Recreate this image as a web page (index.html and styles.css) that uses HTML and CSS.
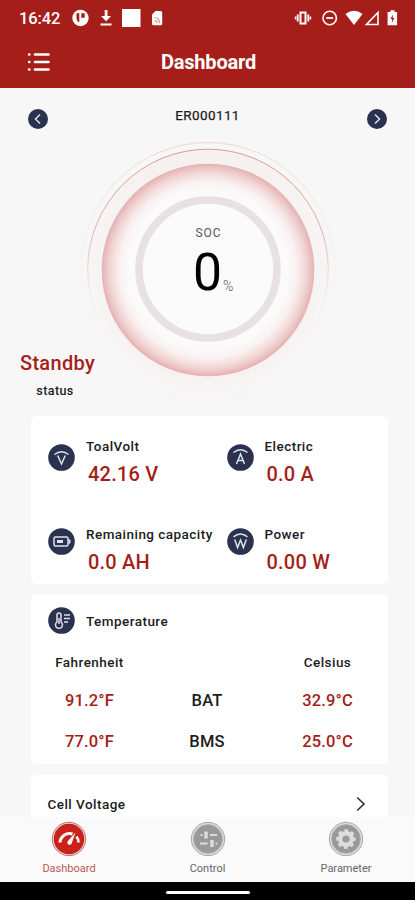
FILE: index.html
```html
<!DOCTYPE html>
<html lang="en">
<head>
<meta charset="utf-8">
<meta name="viewport" content="width=device-width, initial-scale=1">
<title>Dashboard</title>
<link rel="stylesheet" href="styles.css">
</head>
<body>
<div class="app">
  <header class="top">
    <div class="status-bar">
      <span class="clock">16:42</span>
      <svg class="status-left" width="92" height="18" viewBox="0 0 92 18" fill="#fff">
        <circle cx="8.500" cy="9" r="8.200"/>
        <path d="M4.500 4.200h2.800v9.300Q4.800 12.500 4.500 9.500zM9.300 4.200h3.400v4.600H9.300z" fill="#a61e19"/>
        <path d="M32.700 1h2.800v6h3.600l-5 5.200L29 7h3.700zM28.500 14.500h11v1.900h-11z"/>
        <path d="M50 0h18.500v18H50z"/>
        <path d="M83.500 2h5.200q1.500 0 1.500 1.500v11.300q0 1.500-1.500 1.500h-7.200q-1.500 0-1.500-1.500V5.500z"/>
        <path d="M82.500 8.500q5 0 5 5.500M82.500 11.500q2.500 0 2.500 2.500" fill="none" stroke="#d58f8c" stroke-width="1.200"/>
      </svg>
      <svg class="status-right" width="104" height="18" viewBox="0 0 104 18" fill="none" stroke="#fff">
        <path d="M6.500 3.500h5v11h-5z" stroke-width="2"/>
        <path d="M3.700 5.500v7M14.300 5.500v7" stroke-width="1.800"/>
        <path d="M1.600 7.500v3M16.400 7.500v3" stroke-width="1.600"/>
        <circle cx="35.700" cy="9" r="6.700" stroke-width="1.600"/>
        <path d="M32.200 9h7" stroke-width="1.800"/>
        <path d="M51.500 5q8.500-6.500 17 0L60 16z" fill="#fff" stroke="none"/>
        <path d="M84 3.500v12H72.500z" stroke-width="1.600"/>
        <path d="M96.500 1.300h4v1.600h2.600v13.300h-9.500V2.900h2.900z" fill="#fff" stroke="none"/>
        <path d="M98.800 5.500L96.500 10h1.600v3.500l2.300-4.500h-1.600z" fill="#a61e19" stroke="none"/>
      </svg>
    </div>
    <div class="title-bar">
      <svg class="menu" width="24" height="20" viewBox="0 0 24 20" fill="none" stroke="#fff" stroke-width="2.700" stroke-linecap="round">
        <path d="M8 2.500h13.500M8 10h13.500M8 17.500h13.500M2.200 2.500h.1M2.200 10h.1M2.200 17.500h.1"/>
      </svg>
      <h1>Dashboard</h1>
    </div>
  </header>

  <main>
    <section class="device">
      <svg width="20" height="20" viewBox="0 0 20 20"><circle cx="10" cy="10" r="10" fill="#2a3250"/><path d="M12 5.500L7.500 10l4.500 4.500" fill="none" stroke="#dfe2ea" stroke-width="1.500"/></svg>
      <span class="serial">ER000111</span>
      <svg width="20" height="20" viewBox="0 0 20 20"><circle cx="10" cy="10" r="10" fill="#2a3250"/><path d="M8 5.500l4.500 4.500L8 14.500" fill="none" stroke="#dfe2ea" stroke-width="1.500"/></svg>
    </section>

    <section class="hero">
      <svg class="gauge" width="276" height="274" viewBox="70 142 276 274">
        <defs>
          <radialGradient id="disc">
            <stop offset="0" stop-color="#fafafa"/>
            <stop offset=".74" stop-color="#fbfafa"/>
            <stop offset=".83" stop-color="#f9f2f1"/>
            <stop offset=".9" stop-color="#f3dddc"/>
            <stop offset=".96" stop-color="#ecc5c6"/>
            <stop offset="1" stop-color="#e4afb1"/>
          </radialGradient>
          <radialGradient id="halo">
            <stop offset=".76" stop-color="#f3e4e2"/>
            <stop offset="1" stop-color="#f7f7f7" stop-opacity="0"/>
          </radialGradient>
          <linearGradient id="fade-line" x1="0" y1="0" x2="0" y2="1">
            <stop offset="0" stop-color="#dc9799"/>
            <stop offset=".35" stop-color="#e3adaf"/>
            <stop offset=".75" stop-color="#f1d8d8" stop-opacity="0"/>
          </linearGradient>
          <linearGradient id="fade-fill" x1="0" y1="0" x2="0" y2="1">
            <stop offset="0" stop-color="#f6f0ee"/>
            <stop offset=".8" stop-color="#f7f5f4" stop-opacity="0"/>
          </linearGradient>
          <linearGradient id="fade-outer" x1="0" y1="0" x2="0" y2="1">
            <stop offset="0" stop-color="#efd5d5"/>
            <stop offset=".7" stop-color="#f5eeee" stop-opacity="0"/>
          </linearGradient>
        </defs>
        <circle cx="208" cy="274" r="138" fill="url(#halo)" opacity=".55"/>
        <circle cx="208" cy="269.500" r="127" fill="#f7f7f7" fill-opacity=".5" stroke="url(#fade-outer)"/>
        <circle cx="208" cy="269.500" r="120.300" fill="url(#fade-fill)" stroke="url(#fade-line)"/>
        <circle cx="208" cy="270" r="106.300" fill="url(#disc)"/>
        <circle cx="208" cy="269" r="69" fill="#fafafa" stroke="#e7e1e1" stroke-width="7.600"/>
        <text class="soc" x="195.500" y="236.500" textLength="25">SOC</text>
        <text class="soc-value" x="193" y="290" textLength="29" lengthAdjust="spacingAndGlyphs">0</text>
        <text class="soc-unit" x="223" y="290.500">%</text>
      </svg>
      <div class="state">
        <strong>Standby</strong>
        <span>status</span>
      </div>
    </section>

    <section class="card metrics">
      <div class="metric">
        <svg class="badge" viewBox="0 0 27 27"><circle cx="13.500" cy="13.500" r="13.300"/><path d="M6.500 10.500q7-5.500 14 0M9.700 11.500l3.800 8.500 3.800-8.500"/></svg>
        <div><span class="label">ToalVolt</span><span class="value">42.16 V</span></div>
      </div>
      <div class="metric">
        <svg class="badge" viewBox="0 0 27 27"><circle cx="13.500" cy="13.500" r="13.300"/><path d="M6.500 8.500q7-5.500 14 0M9.500 20l4-10 4 10M11 16.500h5"/></svg>
        <div><span class="label">Electric</span><span class="value">0.0 A</span></div>
      </div>
      <div class="metric">
        <svg class="badge" viewBox="0 0 27 27"><circle cx="13.500" cy="13.500" r="13.300"/><path d="M7.500 9h11q1.500 0 1.500 1.500v6q0 1.500-1.500 1.500h-11Q6 18 6 16.500v-6Q6 9 7.500 9zM21 11.500q2 2 0 4"/><path class="solid" d="M9 12h6v3H9z"/></svg>
        <div><span class="label">Remaining capacity</span><span class="value">0.0 AH</span></div>
      </div>
      <div class="metric">
        <svg class="badge" viewBox="0 0 27 27"><circle cx="13.500" cy="13.500" r="13.300"/><path d="M6.500 8.800q7-5.500 14 0M7.700 11.500l2.900 8 2.900-7.500 2.900 7.500 2.900-8"/></svg>
        <div><span class="label">Power</span><span class="value">0.00 W</span></div>
      </div>
    </section>

    <section class="card temperature">
      <div class="temp-head">
        <svg class="badge" viewBox="0 0 27 27"><circle cx="13.500" cy="13.500" r="13.300"/><path d="M9 15V8q0-2 2-2t2 2v7a3.500 3.500 0 1 1-4 0zM11 11v6M16 8h6M16 11.500h6M16 15h4"/></svg>
        <span class="label">Temperature</span>
      </div>
      <div class="temp-grid">
        <span class="label">Fahrenheit</span><span></span><span class="label">Celsius</span>
        <span class="degree">91.2°F</span><span class="sensor">BAT</span><span class="degree">32.9°C</span>
        <span class="degree">77.0°F</span><span class="sensor">BMS</span><span class="degree">25.0°C</span>
      </div>
    </section>

    <section class="card cells">
      <span class="label">Cell Voltage</span>
      <svg width="10" height="16" viewBox="0 0 10 16" fill="none" stroke="#333" stroke-width="1.600"><path d="M1.200 1.500L8 8l-6.800 6.500"/></svg>
    </section>
  </main>

  <nav>
    <a class="tab active">
      <svg width="36" height="36" viewBox="0 0 36 36">
        <circle cx="18" cy="18" r="16.700" fill="#f2d4d2" stroke="#c96d69"/>
        <circle cx="18" cy="18" r="14.600" fill="#cc2118" stroke="#b02720" stroke-width="1.200"/>
        <path d="M9 21.500a9.500 9.500 0 0 1 12.500-8.500" fill="none" stroke="#fff" stroke-width="3"/>
        <path d="M25.500 15.500q2 2.500 2 6" fill="none" stroke="#fff" stroke-width="2.600"/>
        <path d="M24.500 11.500l-3.600 10.200a2.300 2.300 0 1 1-4-1.700z" fill="#fff"/>
      </svg>
      <span>Dashboard</span>
    </a>
    <a class="tab">
      <svg width="36" height="36" viewBox="0 0 36 36">
        <circle cx="18" cy="18" r="16.700" fill="#d9d9d9" stroke="#aaa"/>
        <circle cx="18" cy="18" r="14.300" fill="#999" stroke="#aaa"/>
        <path d="M10.500 14h2M20 14h7M10 22.500h7.500M25.500 22.500h2" stroke="#ddd" stroke-width="1.800"/>
        <path d="M16 10.500v7M22 19v7" stroke="#ddd" stroke-width="3.400"/>
      </svg>
      <span>Control</span>
    </a>
    <a class="tab">
      <svg width="36" height="36" viewBox="0 0 36 36">
        <circle cx="18" cy="18" r="16.700" fill="#d9d9d9" stroke="#aaa"/>
        <circle cx="18" cy="18" r="14.300" fill="#999" stroke="#aaa"/>
        <circle cx="18" cy="18" r="5.800" fill="none" stroke="#ddd" stroke-width="4.400"/>
        <circle cx="18" cy="18" r="8.300" fill="none" stroke="#ddd" stroke-width="3" stroke-dasharray="3.500 3.020" stroke-dashoffset="1.750"/>
      </svg>
      <span>Parameter</span>
    </a>
  </nav>
  <footer><i></i></footer>
</div>
</body>
</html>
```
FILE: styles.css
```css
* { box-sizing: border-box; }
body { margin: 0; background: #f7f7f7; font-family: Roboto, sans-serif; color: #1c1c1c; }
.app { width: 415px; height: 900px; display: flex; flex-direction: column; overflow: hidden; }
svg { display: block; flex: none; }

.top { height: 88px; flex: none; background: #a61e19; color: #fff; }
.status-bar { height: 36px; display: flex; align-items: center; padding: 0 17px 0 19px; }
.clock { width: 53px; font-size: 16.5px; font-weight: 500; letter-spacing: -.1px; }
.status-right { margin-left: auto; }
.title-bar { height: 52px; display: grid; grid-template-columns: 1fr auto 1fr; align-items: center; padding: 0 25px 0 27px; }
h1 { margin: 0; font-size: 20px; line-height: 24px; font-weight: 700; letter-spacing: -.2px; }

main { flex: 1; min-height: 0; overflow: hidden; }
.device { height: 54px; padding: 21px 28px 0; display: flex; justify-content: space-between; align-items: flex-start; }
.serial { font-size: 13.5px; line-height: 14px; margin-top: -1px; letter-spacing: .4px; font-weight: 400; -webkit-text-stroke: .25px; }

.hero { height: 274px; display: grid; }
.gauge { grid-area: 1 / 1; margin-left: 70px; }
.soc { font-size: 12px; fill: #555; }
.soc-value { font-size: 52px; fill: #000; }
.soc-unit { font-size: 14px; font-weight: 300; fill: #555; }
.state { grid-area: 1 / 1; align-self: end; justify-self: start; display: flex; flex-direction: column; align-items: center; padding: 0 0 17px 20px; }
.state strong { font-size: 20px; line-height: 24px; font-weight: 500; color: #a61e19; letter-spacing: .3px; }
.state span { font-size: 12.5px; line-height: 16px; font-weight: 500; margin: 8px 5px 0 0; letter-spacing: .4px; }

.card { width: 357px; margin-left: 30.5px; background: #fff; border-radius: 6px; }
.badge { width: 27px; height: 27px; }
.badge circle { fill: #2a3250; }
.badge path { fill: none; stroke: #dfe2ea; stroke-width: 1.5; }
.badge .solid { fill: #dfe2ea; stroke: none; }
.label { font-size: 13.5px; line-height: 16px; font-weight: 500; letter-spacing: .46px; white-space: nowrap; }

.metrics { height: 168px; padding: 22px 0 0 17.5px; display: grid; grid-template-columns: 178.5px 1fr; grid-template-rows: 88px 58px; }
.metric { display: flex; gap: 11px; }
.metric .badge { margin-top: 5.5px; }
.metric:nth-child(n+3) .badge { margin-top: 2px; }
.metric div { display: flex; flex-direction: column; }
.value { margin: 8px 0 0 2px; font-size: 20px; line-height: 24px; font-weight: 500; color: #a61e19; letter-spacing: .2px; white-space: nowrap; }

.temperature { height: 170px; margin-top: 10px; padding-top: 12.5px; }
.temp-head { display: flex; align-items: center; gap: 11px; padding-left: 17.5px; }
.temp-head .label { padding-top: 1px; }
.temp-grid { display: grid; grid-template-columns: 118px 1fr 120px; grid-template-rows: 36px 41px 40px; align-items: center; justify-items: center; margin-top: 10px; }
.degree, .sensor { font-size: 16.5px; line-height: 20px; font-weight: 500; letter-spacing: .15px; padding-top: 2px; }
.degree { color: #a61e19; }
.sensor { margin-right: 2px; }

.cells { height: 60px; margin-top: 11px; padding: 21px 22px 0 17px; display: flex; justify-content: space-between; align-items: flex-start; }

nav { height: 65px; flex: none; background: #fafafa; display: flex; justify-content: space-between; padding: 4px 19px 0; }
.tab { width: 100px; display: flex; flex-direction: column; align-items: center; font-size: 11px; line-height: 14px; color: #666; }
.tab span { margin-top: 5px; }
.tab.active { color: #bd5754; }
footer { height: 18px; flex: none; background: #000; display: flex; justify-content: center; padding-top: 8.5px; }
footer i { width: 84px; height: 3px; border-radius: 2px; background: #fff; }
```
